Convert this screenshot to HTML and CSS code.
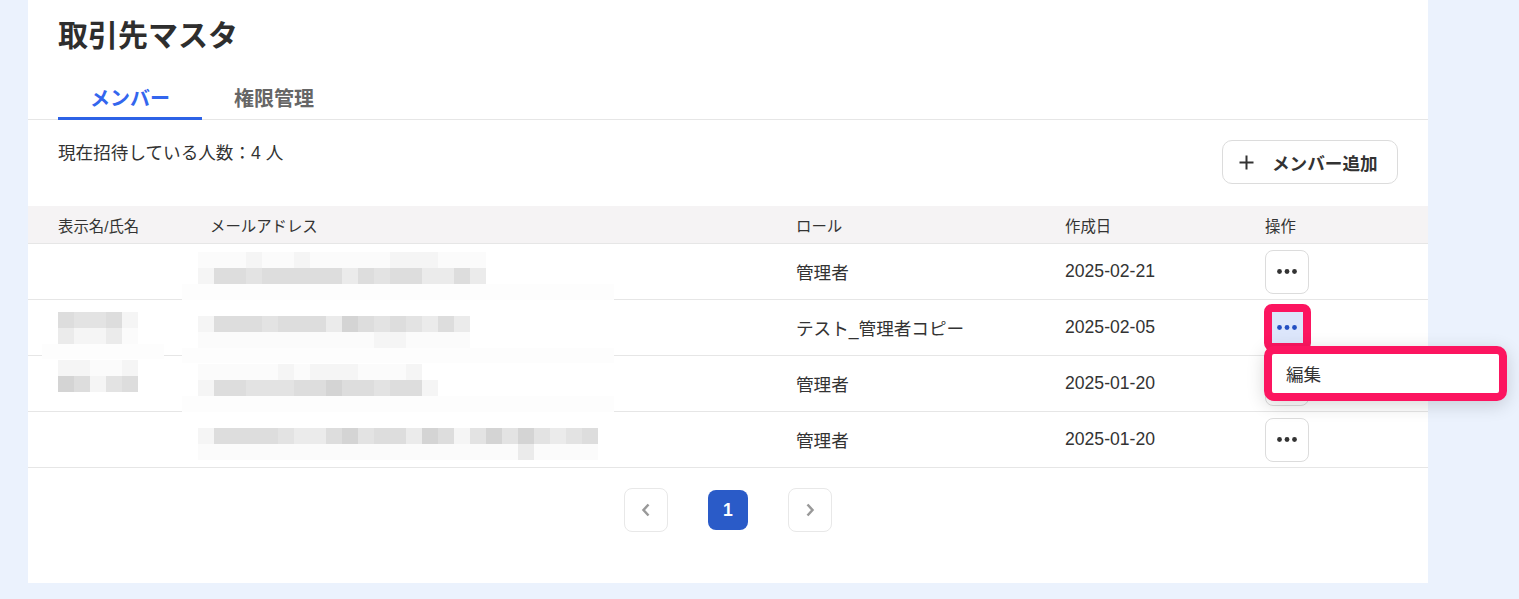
FILE: index.html
```html
<!DOCTYPE html>
<html lang="ja">
<head>
<meta charset="utf-8">
<title>取引先マスタ</title>
<link rel="stylesheet" href="styles.css">
</head>
<body>
<main class="card">
  <header class="head">
    <h1 class="title">取引先マスタ</h1>
  </header>
  <nav class="tabs">
    <a class="tab active">メンバー</a>
    <a class="tab">権限管理</a>
  </nav>
  <section class="toolbar">
    <p class="count">現在招待している人数：4 人</p>
    <button class="add-btn">
      <svg class="plus" width="15" height="15" viewBox="0 0 15 15"><path d="M7.5 0.5v14M0.5 7.5h14" stroke="#333" stroke-width="2" fill="none"/></svg>
      <span>メンバー追加</span>
    </button>
  </section>

  <div class="table">
    <div class="row head-row">
      <div class="cell">表示名/氏名</div>
      <div class="cell">メールアドレス</div>
      <div class="cell">ロール</div>
      <div class="cell">作成日</div>
      <div class="cell">操作</div>
    </div>
    <div class="tbody">
      <div class="row">
        <div class="cell"></div>
        <div class="cell email">
          <div class="mosaic up">
            <div class="mrow"><i class="a"></i><i class="a"></i><i class="a"></i><i class="b"></i><i class="a"></i><i class="a"></i><i class="b"></i><i class="a"></i><i class="a"></i><i class="a"></i><i class="a"></i><i class="a"></i><i class="b"></i><i class="b"></i><i class="b"></i><i class="a"></i><i class="a"></i><i class="a"></i></div>
            <div class="mrow"><i class="b"></i><i class="e"></i><i class="e"></i><i class="d"></i><i class="e"></i><i class="e"></i><i class="e"></i><i class="e"></i><i class="e"></i><i class="c"></i><i class="e"></i><i class="d"></i><i class="e"></i><i class="e"></i><i class="c"></i><i class="c"></i><i class="e"></i><i class="c"></i></div>
          </div>
        </div>
        <div class="cell">管理者</div>
        <div class="cell">2025-02-21</div>
        <div class="cell action">
          <button class="more"><svg width="20" height="5" viewBox="0 0 20 5"><circle cx="2.5" cy="2.5" r="2.4"/><circle cx="10" cy="2.5" r="2.4"/><circle cx="17.5" cy="2.5" r="2.4"/></svg></button>
        </div>
      </div>
      <div class="row">
        <div class="cell">
          <div class="mosaic">
            <div class="mrow"><i class="e"></i><i class="d"></i><i class="d"></i><i class="e"></i><i class="b"></i></div>
            <div class="mrow"><i class="c"></i><i class="b"></i><i class="b"></i><i class="c"></i><i class="a"></i></div>
          </div>
        </div>
        <div class="cell email">
          <div class="mosaic down">
            <div class="mrow"><i class="b"></i><i class="e"></i><i class="e"></i><i class="e"></i><i class="d"></i><i class="e"></i><i class="e"></i><i class="e"></i><i class="c"></i><i class="f"></i><i class="e"></i><i class="d"></i><i class="e"></i><i class="d"></i><i class="c"></i><i class="e"></i><i class="c"></i></div>
            <div class="mrow"><i class="a"></i><i class="a"></i><i class="a"></i><i class="a"></i><i class="a"></i><i class="a"></i><i class="a"></i><i class="a"></i><i class="a"></i><i class="a"></i><i class="a"></i><i class="b"></i><i class="b"></i><i class="a"></i><i class="a"></i><i class="a"></i><i class="a"></i></div>
          </div>
        </div>
        <div class="cell">テスト_管理者コピー</div>
        <div class="cell">2025-02-05</div>
        <div class="cell action">
          <button class="more selected"><svg width="20" height="5" viewBox="0 0 20 5"><circle cx="2.5" cy="2.5" r="2.4"/><circle cx="10" cy="2.5" r="2.4"/><circle cx="17.5" cy="2.5" r="2.4"/></svg></button>
          <div class="menu">
            <div class="menu-item">編集</div>
          </div>
        </div>
      </div>
      <div class="row">
        <div class="cell">
          <div class="mosaic up-lg">
            <div class="mrow"><i class="b"></i><i class="b"></i><i class="a"></i><i class="a"></i><i class="b"></i></div>
            <div class="mrow"><i class="f"></i><i class="e"></i><i class="b"></i><i class="d"></i><i class="e"></i></div>
          </div>
        </div>
        <div class="cell email">
          <div class="mosaic up">
            <div class="mrow"><i class="a"></i><i class="a"></i><i class="a"></i><i class="a"></i><i class="a"></i><i class="b"></i><i class="a"></i><i class="b"></i><i class="b"></i><i class="b"></i><i class="a"></i><i class="a"></i><i class="a"></i><i class="b"></i></div>
            <div class="mrow"><i class="b"></i><i class="e"></i><i class="e"></i><i class="d"></i><i class="d"></i><i class="d"></i><i class="e"></i><i class="e"></i><i class="f"></i><i class="e"></i><i class="e"></i><i class="d"></i><i class="e"></i><i class="e"></i><i class="b"></i></div>
          </div>
        </div>
        <div class="cell">管理者</div>
        <div class="cell">2025-01-20</div>
        <div class="cell action">
          <button class="more"><svg width="20" height="5" viewBox="0 0 20 5"><circle cx="2.5" cy="2.5" r="2.4"/><circle cx="10" cy="2.5" r="2.4"/><circle cx="17.5" cy="2.5" r="2.4"/></svg></button>
        </div>
      </div>
      <div class="row">
        <div class="cell"></div>
        <div class="cell email">
          <div class="mosaic down">
            <div class="mrow"><i class="b"></i><i class="e"></i><i class="e"></i><i class="e"></i><i class="e"></i><i class="d"></i><i class="c"></i><i class="c"></i><i class="e"></i><i class="f"></i><i class="d"></i><i class="e"></i><i class="e"></i><i class="c"></i><i class="f"></i><i class="e"></i><i class="b"></i><i class="d"></i><i class="f"></i><i class="d"></i><i class="f"></i><i class="d"></i><i class="c"></i><i class="d"></i><i class="e"></i></div>
            <div class="mrow"><i class="a"></i><i class="a"></i><i class="a"></i><i class="a"></i><i class="a"></i><i class="a"></i><i class="a"></i><i class="a"></i><i class="a"></i><i class="a"></i><i class="a"></i><i class="a"></i><i class="a"></i><i class="a"></i><i class="a"></i><i class="a"></i><i class="a"></i><i class="a"></i><i class="a"></i><i class="a"></i><i class="c"></i><i class="a"></i><i class="a"></i><i class="a"></i><i class="a"></i></div>
          </div>
        </div>
        <div class="cell">管理者</div>
        <div class="cell">2025-01-20</div>
        <div class="cell action">
          <button class="more"><svg width="20" height="5" viewBox="0 0 20 5"><circle cx="2.5" cy="2.5" r="2.4"/><circle cx="10" cy="2.5" r="2.4"/><circle cx="17.5" cy="2.5" r="2.4"/></svg></button>
        </div>
      </div>
      <div class="veil v1"></div>
      <div class="veil v2"></div>
      <div class="veil v3"></div>
      <div class="veil v4"></div>
    </div>
  </div>

  <nav class="pager">
    <button class="page-nav"><svg width="10" height="14" viewBox="0 0 10 14"><path d="M7.5 1.5L2.5 7l5 5.5" stroke="#999" stroke-width="2.5" fill="none"/></svg></button>
    <button class="page current">1</button>
    <button class="page-nav"><svg width="10" height="14" viewBox="0 0 10 14"><path d="M2.5 1.5L7.5 7l-5 5.5" stroke="#999" stroke-width="2.5" fill="none"/></svg></button>
  </nav>
</main>
</body>
</html>
```
FILE: styles.css
```css
* { box-sizing: border-box; }
html, body { margin: 0; padding: 0; }
body {
  background: #ebf2fd;
  font-family: "Liberation Sans", "Noto Sans CJK JP", sans-serif;
  color: #333;
  min-height: 599px;
}
.card {
  margin-left: 28px;
  width: 1400px;
  background: #fff;
  display: flex;
  flex-direction: column;
}
.head { padding: 14px 30px 0; }
.title {
  margin: 0;
  font-size: 30px;
  line-height: 44px;
  font-weight: 700;
  color: #2e2e2e;
}
.tabs {
  margin-top: 20px;
  padding-left: 30px;
  display: flex;
  border-bottom: 1px solid #e6e6e6;
  height: 42px;
}
.tab {
  padding: 1px 32px 0;
  height: 41px;
  line-height: 40px;
  font-size: 20px;
  font-weight: 700;
  color: #666;
}
.tab.active {
  color: #3366ee;
  border-bottom: 3px solid #2d62e6;
  height: 42px;
  margin-bottom: -1px;
}
.toolbar {
  padding: 20px 30px 0;
  display: flex;
  justify-content: space-between;
  align-items: flex-start;
}
.count {
  margin: 0;
  font-size: 17.6px;
  line-height: 26px;
}
.add-btn {
  height: 44px;
  width: 176px;
  padding: 0 0 0 16px;
  display: flex;
  align-items: center;
  gap: 18px;
  border: 1px solid #dcdcdc;
  border-radius: 10px;
  background: #fff;
  font-family: inherit;
  font-size: 17.6px;
  font-weight: 700;
  color: #333;
}
.table { margin-top: 22px; }
.row {
  display: grid;
  grid-template-columns: 152px 586px 269px 200px 1fr;
  padding-left: 30px;
  height: 56px;
  border-bottom: 1px solid #e6e6e6;
  font-size: 17.6px;
}
.head-row {
  height: 38px;
  background: #f5f3f4;
  font-size: 15.4px;
}
.cell {
  display: flex;
  align-items: center;
  white-space: nowrap;
}
.tbody { position: relative; }
.email .mosaic { margin-left: -12px; }
.mosaic { display: flex; flex-direction: column; }
.mosaic.up { margin-bottom: 7px; }
.mosaic.down { margin-top: 9px; }
.mosaic.up-lg { margin-bottom: 15px; }
.mrow { display: flex; }
.mrow i { display: block; width: 16px; height: 16px; }
.mrow .a { background: #fbfbfb; }
.mrow .b { background: #f5f5f5; }
.mrow .c { background: #ebebeb; }
.mrow .d { background: #e3e3e3; }
.mrow .e { background: #dddddd; }
.mrow .f { background: #d4d4d4; }
.veil { position: absolute; background: #fdfdfd; }
.v1 { left: 154px; top: 40px; width: 432px; height: 16px; }
.v2 { left: 154px; top: 104px; width: 432px; height: 15px; }
.v3 { left: 154px; top: 152px; width: 432px; height: 16px; }
.v4 { left: 14px; top: 100px; width: 122px; height: 15px; }
.action { position: relative; }
.more {
  width: 44px;
  height: 44px;
  border: 1px solid #dcdcdc;
  border-radius: 8px;
  background: #fff;
  display: flex;
  align-items: center;
  justify-content: center;
  padding: 0;
  fill: #333;
}
.more.selected {
  position: relative;
  background: #dce6fb;
  border-color: #c9d7f6;
  fill: #2450c2;
}
.more.selected::after {
  content: "";
  position: absolute;
  left: -2px; top: -3px; right: -3px; bottom: -2px;
  border: 8px solid #fc1560;
  border-radius: 8px;
}
.menu {
  position: absolute;
  left: -1px;
  top: 46px;
  width: 243px;
  height: 55px;
  border: 8px solid #fc1560;
  border-radius: 10px;
  background: #fff;
  box-shadow: 0 4px 18px rgba(0, 0, 0, 0.16);
  z-index: 5;
  display: flex;
  align-items: center;
}
.menu-item {
  padding-left: 14px;
  font-size: 17.6px;
  color: #333;
}
.pager {
  padding: 20px 0 51px;
  display: flex;
  justify-content: center;
  align-items: center;
  gap: 40px;
}
.page-nav {
  width: 44px;
  height: 44px;
  border: 1px solid #e8e8e8;
  border-radius: 8px;
  background: #fff;
  display: flex;
  align-items: center;
  justify-content: center;
  padding: 0;
}
.page.current {
  width: 40px;
  height: 40px;
  border: none;
  border-radius: 8px;
  background: #2a5bc8;
  color: #fff;
  font-family: inherit;
  font-size: 17.6px;
  font-weight: 700;
  padding: 0;
}
```
